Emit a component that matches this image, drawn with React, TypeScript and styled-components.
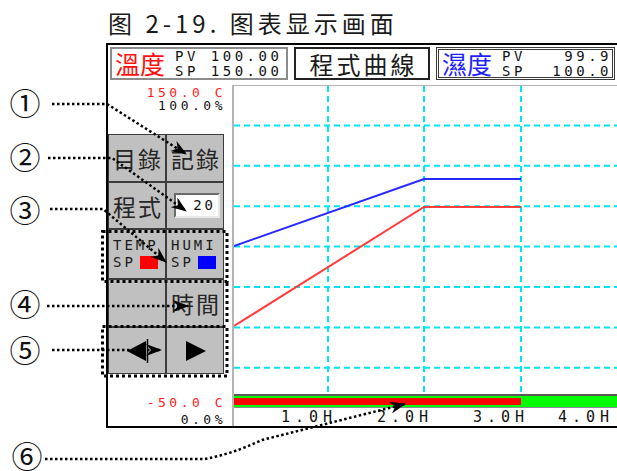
import React from "react";
import styled, { createGlobalStyle } from "styled-components";

const GlobalStyle = createGlobalStyle`
  html, body {
    margin: 0;
    padding: 0;
    background: #fff;
    overflow: hidden;
  }
  body {
    font-family: "Noto Sans CJK TC", "Noto Sans", sans-serif;
  }
`;

const Page = styled.div`
  position: relative;
  width: 617px;
  height: 471px;
  overflow: hidden;
  box-sizing: border-box;
  padding: 4px 0 0 106px;
`;

const Caption = styled.div`
  box-sizing: border-box;
  height: 39px;
  padding: 3px 0 0 2px;
  font-family: "Noto Sans CJK SC", sans-serif;
  font-size: 24px;
  line-height: 32px;
  letter-spacing: 4px;
  color: #1a1a1a;
  white-space: pre;
`;

const Frame = styled.div`
  box-sizing: border-box;
  width: 530px;
  height: 385px;
  border: 2px solid #000;
  border-right: none;
  display: flex;
  flex-direction: column;
`;

const Header = styled.div`
  box-sizing: border-box;
  height: 41px;
  padding: 2px 0 0 2px;
  display: flex;
  gap: 6px;
  align-items: flex-start;
`;

const Readout = styled.div<{ $w: number; $border: string }>`
  box-sizing: border-box;
  width: ${(p) => p.$w}px;
  height: 33px;
  border: ${(p) => p.$border};
  display: flex;
  align-items: center;
`;

const BigWord = styled.span<{ $color: string }>`
  font-size: 25px;
  line-height: 1;
  color: ${(p) => p.$color};
  padding-left: 3px;
  margin-right: 10px;
  white-space: nowrap;
`;

const TitleText = styled.span`
  flex: 1;
  text-align: center;
  font-size: 24px;
  letter-spacing: 3px;
  color: #1a1a1a;
  padding-left: 3px;
`;

const Digits = styled.div`
  font-family: "DejaVu Sans Mono", monospace;
  font-size: 14px;
  line-height: 15px;
  letter-spacing: 3.5px;
  color: #111;
  white-space: pre;
`;

const DigitGrid = styled(Digits)`
  flex: 1;
  display: grid;
  grid-template-columns: auto 1fr;
`;

const Right = styled.span`
  text-align: right;
`;

const Body = styled.div`
  flex: 1;
  display: flex;
`;

const LeftPanel = styled.div`
  width: 124px;
  display: flex;
  flex-direction: column;
`;

const Scale = styled.div<{ $top: number; $h?: number }>`
  box-sizing: border-box;
  height: ${(p) => (p.$h ? `${p.$h}px` : "auto")};
  padding: ${(p) => p.$top}px 6px 0 0;
  text-align: right;
  font-family: "DejaVu Sans Mono", monospace;
  font-size: 13px;
  line-height: 13px;
  letter-spacing: 3.5px;
  white-space: pre;
`;

const ScaleLine = styled.div<{ $red?: boolean; $gap?: number }>`
  color: ${(p) => (p.$red ? "#ff2020" : "#111")};
  margin-top: ${(p) => p.$gap ?? 0}px;
`;

const Keys = styled.div`
  box-sizing: border-box;
  width: 116px;
  height: 240px;
  padding: 1px;
  background: #3c3c3c;
  display: grid;
  grid-template-columns: 56px 56px;
  grid-template-rows: 46px 45px 48px 46px 45px;
  gap: 2px;
`;

const Key = styled.div`
  background: #c0c0c0;
  display: flex;
  align-items: center;
  justify-content: center;
  font-size: 23px;
  letter-spacing: 2px;
  color: #262626;
  padding-left: 2px;
`;

const SpinBox = styled.div`
  box-sizing: border-box;
  width: 46px;
  height: 25px;
  margin-left: 2px;
  background: #fff;
  border: 2px solid;
  border-color: #6a6a6a #e8e8e8 #e8e8e8 #6a6a6a;
  text-align: right;
  padding-right: 2px;
  font-family: "DejaVu Sans Mono", monospace;
  font-size: 14px;
  line-height: 20px;
  letter-spacing: 3px;
  color: #111;
`;

const SetKey = styled.div`
  background: #c0c0c0;
  box-sizing: border-box;
  padding: 8px 0 0 4px;
  font-family: "DejaVu Sans Mono", monospace;
  font-size: 14px;
  line-height: 15px;
  letter-spacing: 3px;
  color: #1a1a1a;
  white-space: pre;
`;

const SpRow = styled.div`
  display: flex;
  align-items: center;
  margin-top: 2px;
`;

const Swatch = styled.span<{ $color: string }>`
  display: inline-block;
  width: 18px;
  height: 13px;
  margin-left: 4px;
  background: ${(p) => p.$color};
`;

const PlotColumn = styled.div`
  flex: 1;
  border-left: 2px solid #b4b4b4;
  border-top: 1px solid #b4b4b4;
  display: flex;
  flex-direction: column;
`;

const RunBar = styled.div`
  box-sizing: border-box;
  height: 14px;
  padding: 2px 0;
  background: #00ff00;
  border-top: 2px solid #5a5a5a;
  border-bottom: 1px solid #8a8a8a;
`;

const RunFill = styled.div`
  width: 287px;
  height: 7px;
  background: #ff0000;
`;

const Axis = styled.div`
  display: flex;
  padding: 2px 0 0 7px;
  font-family: "DejaVu Sans Mono", monospace;
  font-size: 15px;
  line-height: 15px;
  letter-spacing: 5px;
  color: #111;
`;

const Tick = styled.span`
  width: 96px;
  text-align: right;
  flex: none;
  &:last-child {
    width: 85px;
  }
`;

const Notes = styled.svg`
  position: absolute;
  left: 0;
  top: 0;
  pointer-events: none;
`;

const COLS = [94, 190, 287];
const ROWS = [39.4, 79.8, 120.2, 160.6, 201, 241.4, 281.8];

function Chart() {
  return (
    <svg width={385} height={308} style={{ display: "block" }}>
      {COLS.map((x) => (
        <line key={"v" + x} x1={x} y1={0} x2={x} y2={308} stroke="#00e5f0" strokeWidth={2} strokeDasharray="6 4" />
      ))}
      {ROWS.map((y) => (
        <line key={"h" + y} x1={0} y1={y} x2={385} y2={y} stroke="#00e5f0" strokeWidth={2} strokeDasharray="6 4" />
      ))}
      <polyline points="0,160 190,93 287,93" fill="none" stroke="#2828ff" strokeWidth={2} />
      <polyline points="0,240 190,121 287,121" fill="none" stroke="#ff3c3c" strokeWidth={2} />
    </svg>
  );
}

function Annotations() {
  const dot = { fill: "none", stroke: "#000", strokeWidth: 2.5, strokeDasharray: "2.5 2.5" } as const;
  const box = { fill: "none", stroke: "#000", strokeWidth: 3, strokeDasharray: "3 3" } as const;
  const marks: [string, number, number][] = [
    ["①", 25, 101],
    ["②", 25, 155],
    ["③", 25, 208],
    ["④", 25, 302],
    ["⑤", 25, 348],
    ["⑥", 27, 454],
  ];
  return (
    <Notes width={617} height={471}>
      <defs>
        <marker id="tip" markerUnits="userSpaceOnUse" markerWidth={16} markerHeight={12} refX={15} refY={6} orient="auto">
          <path d="M0,0 L16,6 L0,12 L5,6 z" fill="#000" />
        </marker>
      </defs>
      <rect x={102.5} y={231.5} width={124.5} height={50} {...box} />
      <path d="M227,283 V325" {...box} />
      <rect x={102.5} y={326.5} width={124.5} height={49.5} {...box} />
      <path d="M52,104 H107 L186,154" {...dot} markerEnd="url(#tip)" />
      <path d="M48,158 H112 L186,211" {...dot} markerEnd="url(#tip)" />
      <path d="M50,209 H103 L166,262" {...dot} markerEnd="url(#tip)" />
      <path d="M47,306 H188" {...dot} markerEnd="url(#tip)" />
      <path d="M52,350 H161" {...dot} markerEnd="url(#tip)" />
      <path d="M45,459 H205 Q232,454 262,440 L405,404" {...dot} markerEnd="url(#tip)" />
      {marks.map(([t, x, y]) => (
        <text
          key={t}
          x={x}
          y={y}
          textAnchor="middle"
          dominantBaseline="central"
          fontFamily='"Noto Sans CJK JP", sans-serif'
          fontSize={31}
          fill="#111"
        >
          {t}
        </text>
      ))}
    </Notes>
  );
}

export default function App() {
  return (
    <>
      <GlobalStyle />
      <Page>
        <Caption>{"图 2-19. 图表显示画面"}</Caption>
        <Frame>
          <Header>
            <Readout $w={178} $border="2px solid #8c8c8c">
              <BigWord $color="#ff1010">溫度</BigWord>
              <Digits>{"PV 100.00\nSP 150.00"}</Digits>
            </Readout>
            <Readout $w={136} $border="2px solid #222">
              <TitleText>程式曲線</TitleText>
            </Readout>
            <Readout $w={179} $border="3px double #3a3a3a">
              <BigWord $color="#1e1eff">濕度</BigWord>
              <DigitGrid>
                <span>PV</span>
                <Right>99.9</Right>
                <span>SP</span>
                <Right>100.0</Right>
              </DigitGrid>
            </Readout>
          </Header>
          <Body>
            <LeftPanel>
              <Scale $top={1} $h={49}>
                <ScaleLine $red>150.0 C</ScaleLine>
                <ScaleLine>100.0%</ScaleLine>
              </Scale>
              <Keys>
                <Key>目錄</Key>
                <Key>記錄</Key>
                <Key>程式</Key>
                <Key>
                  <SpinBox>20</SpinBox>
                </Key>
                <SetKey>
                  TEMP
                  <SpRow>
                    SP<Swatch $color="#ff0000" />
                  </SpRow>
                </SetKey>
                <SetKey>
                  HUMI
                  <SpRow>
                    SP<Swatch $color="#0000ff" />
                  </SpRow>
                </SetKey>
                <Key />
                <Key>時間</Key>
                <Key>
                  <svg width={26} height={24}>
                    <polygon points="2,12 21,2 21,22" fill="#000" />
                    <line x1={22.5} y1={0} x2={22.5} y2={24} stroke="#000" strokeWidth={1.5} />
                  </svg>
                </Key>
                <Key>
                  <svg width={22} height={24}>
                    <polygon points="1,2 21,12 1,22" fill="#000" />
                  </svg>
                </Key>
              </Keys>
              <Scale $top={22}>
                <ScaleLine $red>-50.0 C</ScaleLine>
                <ScaleLine $gap={4}>0.0%</ScaleLine>
              </Scale>
            </LeftPanel>
            <PlotColumn>
              <Chart />
              <RunBar>
                <RunFill />
              </RunBar>
              <Axis>
                <Tick>1.0H</Tick>
                <Tick>2.0H</Tick>
                <Tick>3.0H</Tick>
                <Tick>4.0H</Tick>
              </Axis>
            </PlotColumn>
          </Body>
        </Frame>
        <Annotations />
      </Page>
    </>
  );
}
